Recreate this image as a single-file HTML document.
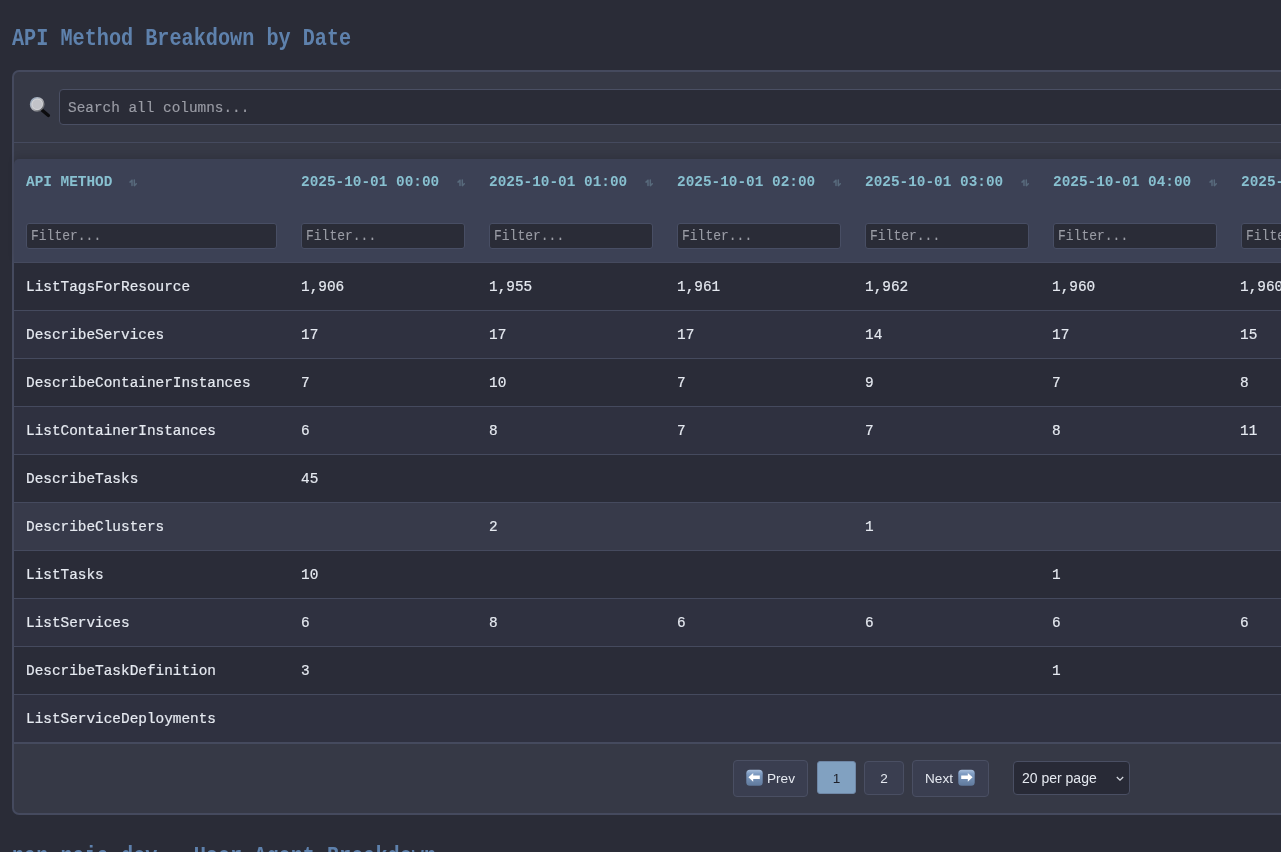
<!DOCTYPE html>
<html><head><meta charset="utf-8">
<style>
*{box-sizing:border-box;margin:0;padding:0}
html,body{width:1281px;height:852px;overflow:hidden;background:#2a2c37}
body{font-family:"Liberation Mono",monospace;position:relative;color:#e5e9f0}
.title{will-change:transform;position:absolute;left:12px;top:27px;font-size:20.2px;font-weight:bold;color:#5e81ac;white-space:nowrap;line-height:26px;transform:scaleY(1.2);transform-origin:0 18.4px}
.card{position:absolute;left:12px;top:70px;width:1400px;height:745px;background:#363946;border:2px solid #454a5e;border-radius:7px}
.search-ico{position:absolute;left:14px;top:24px;width:24px;height:24px}
.search{position:absolute;left:45px;top:17px;width:1400px;height:36px;background:#2a2c37;border:1px solid #4a4f63;border-radius:4px;font-size:14.4px;color:#9a9ca5;padding-left:8px;line-height:34px;white-space:nowrap}
.sep{position:absolute;left:0;top:70px;width:1400px;height:1px;background:#454a5e}
.thead{position:absolute;left:0;top:87px;width:1400px;height:103px;background:#3c4155;border-top-left-radius:5px;box-shadow:0 -3px 6px rgba(0,0,0,0.10)}
.th{position:absolute;top:0;height:104px}
.th .lbl{will-change:transform;position:absolute;top:13px;left:12px;font-size:14.4px;font-weight:bold;color:#88c0d0;white-space:nowrap;line-height:20px}
.th .sort{position:absolute;top:20px}
.filter{position:absolute;top:64px;left:12px;height:26px;background:#2a2c37;border:1px solid #484e64;border-radius:3px;font-size:13px;color:#9a9ca5;padding-left:4px;line-height:25px;white-space:nowrap}
.rows{position:absolute;left:0;top:190px;width:1400px}
.row{position:relative;height:48px;border-top:1px solid #454a5e;background:#2a2c38}
.row.even{background:#2f3140}
.row.hover{background:#373a4a}
.row span{will-change:transform;position:absolute;top:1px;transform:scaleY(1.08);transform-origin:0 27.3px;-webkit-text-stroke:0.2px #e5e9f0;line-height:47px;font-size:14.4px;white-space:nowrap}
.pager{position:absolute;left:0;top:670px;width:1400px;border-top:2px solid #454a5e;height:72px}
.pbtn{position:absolute;border:1px solid #4a4f63;border-radius:4px;background:#3a3e50;font-family:"Liberation Sans",sans-serif;font-size:13.6px;color:#e5e9f0}
.pbtn span{position:absolute;will-change:transform}
.pt{top:0;line-height:35px}
.pc{left:0;right:0;top:1px;text-align:center;line-height:32px}
.pi{width:17px;height:17px}
.pi svg{display:block}
.sel{position:absolute;left:999px;top:17px;width:117px;height:34px;background:#282a36;border:1px solid #4a4f63;border-radius:4px;font-family:"Liberation Sans",sans-serif;font-size:14px;color:#e5e9f0}
.sel span{will-change:transform;position:absolute;left:8px;top:0;line-height:32px}
.g{display:inline-block;will-change:transform}
.search .g{position:relative;top:0.5px;transform:scaleY(1.06);transform-origin:0 20.8px;-webkit-text-stroke:0.15px #9a9ca5}
.filter .g{transform:scaleY(1.1);transform-origin:0 16px;-webkit-text-stroke:0.1px #9a9ca5}
</style></head><body>
<div class="title">API Method Breakdown by Date</div>
<div class="card">
  <svg class="search-ico" viewBox="0 0 24 24"><defs><linearGradient id="rim" x1="0" y1="0" x2="1" y2="1"><stop offset="0" stop-color="#93a6bd"/><stop offset="0.5" stop-color="#b8b9be"/><stop offset="1" stop-color="#4a4c52"/></linearGradient></defs><line x1="14.2" y1="14.2" x2="20.4" y2="19.4" stroke="#0c0c0e" stroke-width="3.3" stroke-linecap="round"/><circle cx="9.2" cy="8.3" r="6.5" fill="#c2c3c8" stroke="url(#rim)" stroke-width="1.8"/><circle cx="9.2" cy="8.3" r="5.3" fill="none" stroke="#dcdde0" stroke-width="0.7"/></svg>
  <div class="search"><span class="g">Search all columns...</span></div>
  <div class="sep"></div>
  <div class="thead">
    <div class="th" style="left:0;width:275px"><span class="lbl">API METHOD</span><svg class="sort" style="left:115px" width="8" height="8" viewBox="0 0 8 8"><path d="M3 6.6V1.2M1 3.1L3 1.2M5.3 0.9V6.6M5.3 6.6L7.3 4.7" stroke="#586a7c" stroke-width="1.5" fill="none" stroke-linecap="round"/></svg><div class="filter" style="width:251px"><span class="g">Filter...</span></div></div>
    <div class="th" style="left:275px;width:188px"><span class="lbl">2025-10-01 00:00</span><svg class="sort" style="left:168px" width="8" height="8" viewBox="0 0 8 8"><path d="M3 6.6V1.2M1 3.1L3 1.2M5.3 0.9V6.6M5.3 6.6L7.3 4.7" stroke="#586a7c" stroke-width="1.5" fill="none" stroke-linecap="round"/></svg><div class="filter" style="width:164px"><span class="g">Filter...</span></div></div>
    <div class="th" style="left:463px;width:188px"><span class="lbl">2025-10-01 01:00</span><svg class="sort" style="left:168px" width="8" height="8" viewBox="0 0 8 8"><path d="M3 6.6V1.2M1 3.1L3 1.2M5.3 0.9V6.6M5.3 6.6L7.3 4.7" stroke="#586a7c" stroke-width="1.5" fill="none" stroke-linecap="round"/></svg><div class="filter" style="width:164px"><span class="g">Filter...</span></div></div>
    <div class="th" style="left:651px;width:188px"><span class="lbl">2025-10-01 02:00</span><svg class="sort" style="left:168px" width="8" height="8" viewBox="0 0 8 8"><path d="M3 6.6V1.2M1 3.1L3 1.2M5.3 0.9V6.6M5.3 6.6L7.3 4.7" stroke="#586a7c" stroke-width="1.5" fill="none" stroke-linecap="round"/></svg><div class="filter" style="width:164px"><span class="g">Filter...</span></div></div>
    <div class="th" style="left:839px;width:188px"><span class="lbl">2025-10-01 03:00</span><svg class="sort" style="left:168px" width="8" height="8" viewBox="0 0 8 8"><path d="M3 6.6V1.2M1 3.1L3 1.2M5.3 0.9V6.6M5.3 6.6L7.3 4.7" stroke="#586a7c" stroke-width="1.5" fill="none" stroke-linecap="round"/></svg><div class="filter" style="width:164px"><span class="g">Filter...</span></div></div>
    <div class="th" style="left:1027px;width:188px"><span class="lbl">2025-10-01 04:00</span><svg class="sort" style="left:168px" width="8" height="8" viewBox="0 0 8 8"><path d="M3 6.6V1.2M1 3.1L3 1.2M5.3 0.9V6.6M5.3 6.6L7.3 4.7" stroke="#586a7c" stroke-width="1.5" fill="none" stroke-linecap="round"/></svg><div class="filter" style="width:164px"><span class="g">Filter...</span></div></div>
    <div class="th" style="left:1215px;width:188px"><span class="lbl">2025-10-01 05:00</span><svg class="sort" style="left:168px" width="8" height="8" viewBox="0 0 8 8"><path d="M3 6.6V1.2M1 3.1L3 1.2M5.3 0.9V6.6M5.3 6.6L7.3 4.7" stroke="#586a7c" stroke-width="1.5" fill="none" stroke-linecap="round"/></svg><div class="filter" style="width:164px"><span class="g">Filter...</span></div></div>
  </div>
  <div class="rows">
    <div class="row"><span style="left:12px">ListTagsForResource</span><span style="left:287px">1,906</span><span style="left:475px">1,955</span><span style="left:663px">1,961</span><span style="left:851px">1,962</span><span style="left:1038px">1,960</span><span style="left:1226px">1,960</span></div>
    <div class="row even"><span style="left:12px">DescribeServices</span><span style="left:287px">17</span><span style="left:475px">17</span><span style="left:663px">17</span><span style="left:851px">14</span><span style="left:1038px">17</span><span style="left:1226px">15</span></div>
    <div class="row"><span style="left:12px">DescribeContainerInstances</span><span style="left:287px">7</span><span style="left:475px">10</span><span style="left:663px">7</span><span style="left:851px">9</span><span style="left:1038px">7</span><span style="left:1226px">8</span></div>
    <div class="row even"><span style="left:12px">ListContainerInstances</span><span style="left:287px">6</span><span style="left:475px">8</span><span style="left:663px">7</span><span style="left:851px">7</span><span style="left:1038px">8</span><span style="left:1226px">11</span></div>
    <div class="row"><span style="left:12px">DescribeTasks</span><span style="left:287px">45</span></div>
    <div class="row hover"><span style="left:12px">DescribeClusters</span><span style="left:475px">2</span><span style="left:851px">1</span></div>
    <div class="row"><span style="left:12px">ListTasks</span><span style="left:287px">10</span><span style="left:1038px">1</span></div>
    <div class="row even"><span style="left:12px">ListServices</span><span style="left:287px">6</span><span style="left:475px">8</span><span style="left:663px">6</span><span style="left:851px">6</span><span style="left:1038px">6</span><span style="left:1226px">6</span></div>
    <div class="row"><span style="left:12px">DescribeTaskDefinition</span><span style="left:287px">3</span><span style="left:1038px">1</span></div>
    <div class="row even"><span style="left:12px">ListServiceDeployments</span></div>
  </div>
  <div class="pager">
    <div class="pbtn" style="left:719px;top:16px;width:75px;height:37px"><span class="pi" style="left:12px;top:8px"><svg class="emo" width="17" height="17" viewBox="0 0 17 17"><defs><linearGradient id="eg" x1="0" y1="0" x2="0" y2="1"><stop offset="0" stop-color="#a9bfdc"/><stop offset="0.25" stop-color="#7f9cc2"/><stop offset="1" stop-color="#60799c"/></linearGradient></defs><rect x="0.3" y="0.7" width="16.4" height="16" rx="3.5" fill="url(#eg)"/><path d="M2.4 8.3L7.2 3.9V6.6H13.8V10H7.2V12.7Z" fill="#fff"/></svg></span><span class="pt" style="left:33px">Prev</span></div>
    <div class="pbtn" style="left:803px;top:17px;width:39px;height:33px;background:#81a1c1;border-color:#6f87a6;border-radius:3px;color:#1e2029"><span class="pc">1</span></div>
    <div class="pbtn" style="left:850px;top:17px;width:40px;height:34px"><span class="pc">2</span></div>
    <div class="pbtn" style="left:898px;top:16px;width:77px;height:37px"><span class="pt" style="left:12px">Next</span><span class="pi" style="left:45px;top:8px"><svg class="emo" width="17" height="17" viewBox="0 0 17 17"><rect x="0.3" y="0.7" width="16.4" height="16" rx="3.5" fill="url(#eg)"/><path d="M14.6 8.3L9.8 3.9V6.6H3.2V10H9.8V12.7Z" fill="#fff"/></svg></span></div>
    <div class="sel"><span>20 per page</span><svg style="position:absolute;left:102px;top:14px" width="8" height="6" viewBox="0 0 8 6"><path d="M0.8 1L4 4.2L7.2 1" stroke="#d8dce4" stroke-width="1.2" fill="none"/></svg></div>
  </div>
</div>
<div class="title" style="top:845px">nan-naia-dev - User Agent Breakdown</div>
</body></html>
